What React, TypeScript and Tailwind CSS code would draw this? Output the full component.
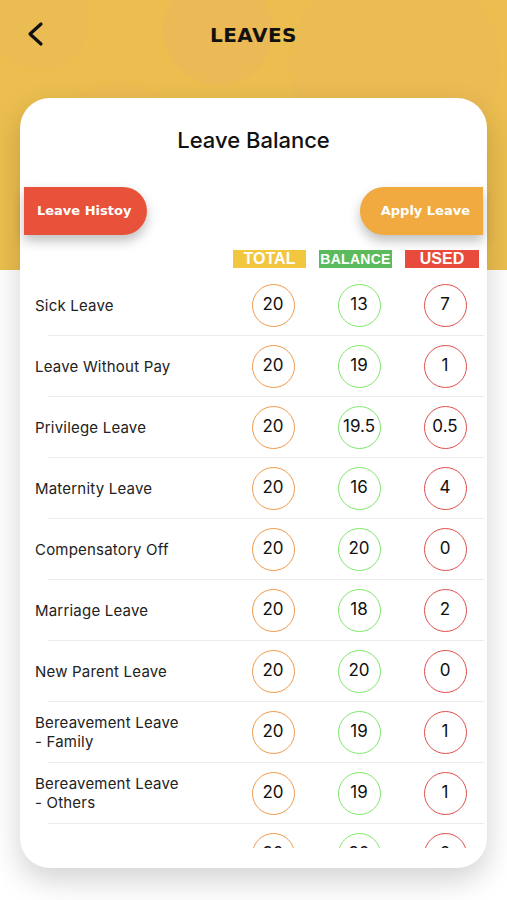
import React from "react";

type Row = { name: string[]; total: string; balance: string; used: string };

const rows: Row[] = [
  { name: ["Sick Leave"], total: "20", balance: "13", used: "7" },
  { name: ["Leave Without Pay"], total: "20", balance: "19", used: "1" },
  { name: ["Privilege Leave"], total: "20", balance: "19.5", used: "0.5" },
  { name: ["Maternity Leave"], total: "20", balance: "16", used: "4" },
  { name: ["Compensatory Off"], total: "20", balance: "20", used: "0" },
  { name: ["Marriage Leave"], total: "20", balance: "18", used: "2" },
  { name: ["New Parent Leave"], total: "20", balance: "20", used: "0" },
  { name: ["Bereavement Leave", "- Family"], total: "20", balance: "19", used: "1" },
  { name: ["Bereavement Leave", "- Others"], total: "20", balance: "19", used: "1" },
  { name: [], total: "20", balance: "20", used: "0" },
];

function Circle({ value, color }: { value: string; color: string }) {
  return (
    <div className="w-[86px] flex justify-center pl-[2px]">
      <div
        className={`w-[43px] h-[43px] rounded-full border-[1.5px] flex items-center justify-center text-[17px] text-[#111] ${color}`}
      >
        {value}
      </div>
    </div>
  );
}

export default function App() {
  return (
    <div
      className="relative h-[900px] w-[507px] overflow-hidden bg-white"
      style={{ fontFamily: "Inter, 'Liberation Sans', sans-serif" }}
    >
      {/* Header */}
      <div className="relative h-[270px] bg-[#ecbe4f] overflow-hidden">
        <div className="absolute -left-[10px] -top-[30px] w-[100px] h-[100px] rounded-full bg-[#ebb85a] opacity-40" />
        <div className="absolute left-[163px] -top-[25px] w-[110px] h-[110px] rounded-full bg-[#eab25e] opacity-40" />
        <div className="absolute left-[290px] -top-[40px] w-[210px] h-[210px] rounded-full bg-[#ebb65c] opacity-40" />
        <div className="absolute left-[60px] top-[80px] w-[120px] h-[120px] rounded-full bg-[#ecbb55] opacity-30" />
        <div className="relative flex h-[70px] items-center justify-center">
          <svg
            className="absolute left-[24px] top-[20px]"
            width="24"
            height="28"
            viewBox="0 0 24 28"
            fill="none"
            stroke="#111"
            strokeWidth="3.2"
            strokeLinecap="round"
            strokeLinejoin="round"
          >
            <path d="M17 4 L6 14 L17 24" />
          </svg>
          <div
            className="text-[20px] font-bold tracking-[0.5px] text-[#111]"
            style={{ fontFamily: "'DejaVu Sans', Verdana, sans-serif" }}
          >
            LEAVES
          </div>
        </div>
      </div>

      {/* Card */}
      <div className="relative mx-[20px] -mt-[172px] h-[770px] rounded-[30px] bg-white shadow-[0_12px_30px_rgba(0,0,0,0.18)] flex flex-col pt-[28px]">
        <div className="text-center text-[22px] font-medium text-[#111] leading-[28px]">
          Leave Balance
        </div>

        <div className="mt-[33px] flex justify-between px-[4px]">
          <div
            className="h-[48px] w-[123px] rounded-r-full bg-[#e8523a] flex items-center pl-[13px] text-[13px] font-bold text-white shadow-[0_6px_12px_rgba(0,0,0,0.25)]"
            style={{ fontFamily: "'DejaVu Sans', Verdana, sans-serif" }}
          >
            Leave Histoy
          </div>
          <div
            className="h-[48px] w-[123px] rounded-l-full bg-[#f0aa40] flex items-center justify-end pr-[13px] text-[13px] font-bold text-white shadow-[0_6px_12px_rgba(0,0,0,0.25)]"
            style={{ fontFamily: "'DejaVu Sans', Verdana, sans-serif" }}
          >
            Apply Leave
          </div>
        </div>

        <div
          className="mt-[15px] flex justify-end pr-[8px] gap-[13px] text-[16px] font-bold text-white leading-[18px]"
          style={{ fontFamily: "'Liberation Sans', Arial, sans-serif" }}
        >
          <div className="w-[73px] h-[18px] bg-[#f2c63f] flex items-center justify-center">TOTAL</div>
          <div className="w-[73px] h-[18px] bg-[#5bbb5c] flex items-center justify-center text-[14px] tracking-[0.3px]">BALANCE</div>
          <div className="w-[74px] h-[18px] bg-[#e84b3c] flex items-center justify-center">USED</div>
        </div>

        <div className="mt-[7px] h-[573px] overflow-hidden">
          {rows.map((r, i) => (
            <div key={i} className="flex flex-col">
              <div className="flex h-[60px] items-center">
                <div className="flex-1 pl-[15px] text-[15px] leading-[19px] text-[#222] tracking-[0.2px]">
                  {r.name.map((n, j) => (
                    <div key={j}>{n}</div>
                  ))}
                </div>
                <Circle value={r.total} color="border-[#f0994a]" />
                <Circle value={r.balance} color="border-[#7fe66a]" />
                <Circle value={r.used} color="border-[#df4e4a]" />
              </div>
              <div className="ml-[28px] mr-[3px] h-px bg-[#ececec]" />
            </div>
          ))}
        </div>
      </div>
    </div>
  );
}
